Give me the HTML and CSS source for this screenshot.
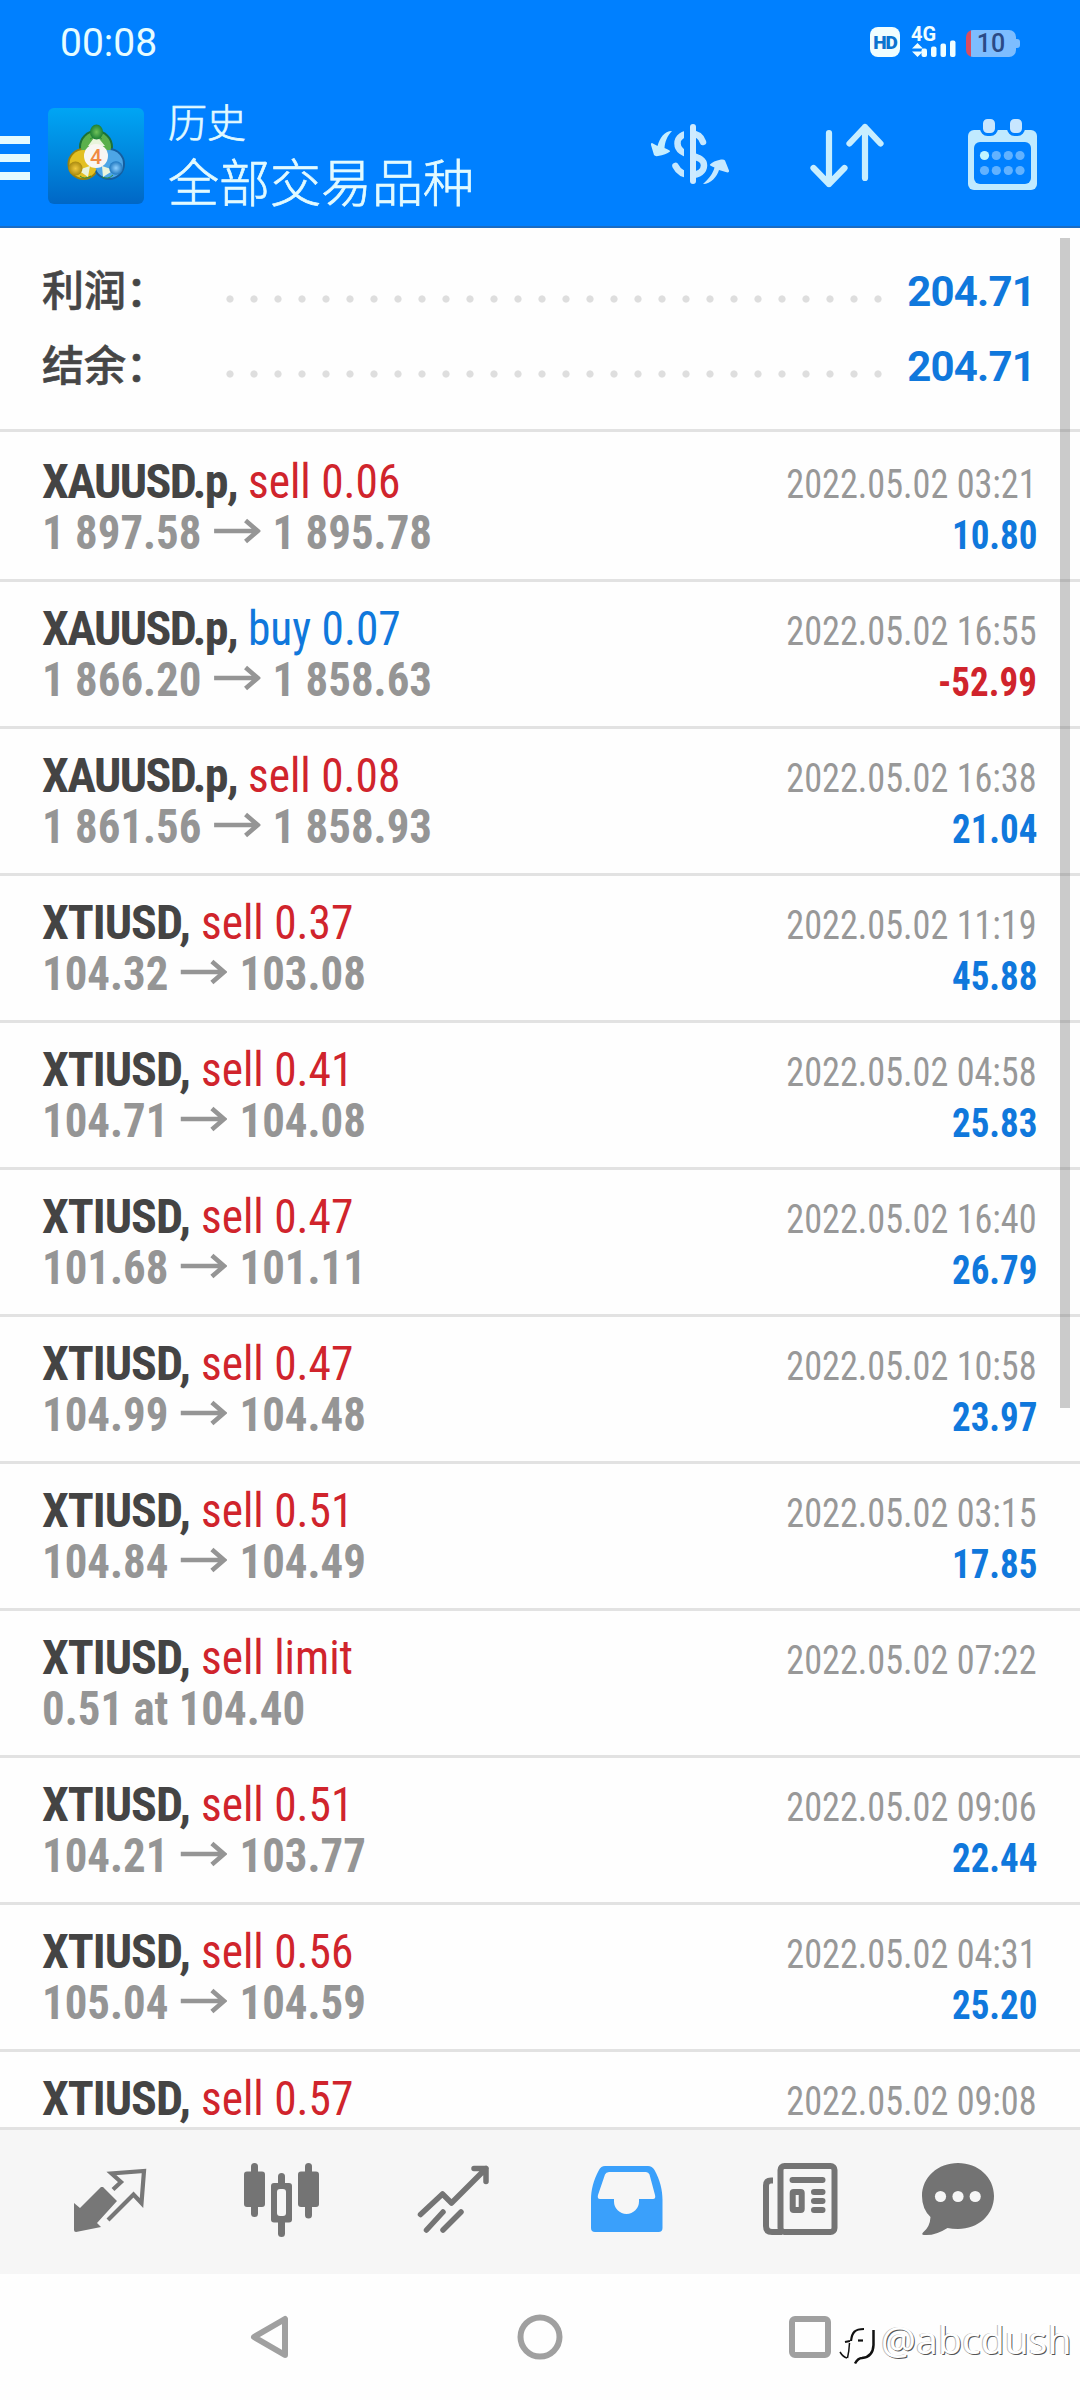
FILE: index.html
```html
<!DOCTYPE html>
<html lang="zh-CN">
<head>
<meta charset="utf-8">
<title>历史</title>
<link rel="stylesheet" href="styles.css">
</head>
<body>
<svg width="0" height="0" class="defs"><defs>
  <symbol id="arrow" viewBox="0 0 46 26" preserveAspectRatio="none"><path d="M0 13H43M31 2.500L43 13L31 23.500" fill="none" stroke="#959595" stroke-width="4.500"/></symbol>
  <linearGradient id="tile" x1="0" y1="0" x2="0" y2="1"><stop offset="0" stop-color="#00a5f4"/><stop offset=".5" stop-color="#0088de"/><stop offset="1" stop-color="#0067c6"/></linearGradient>
  <radialGradient id="green"><stop offset="0" stop-color="#6fc25a"/><stop offset="1" stop-color="#1c7f35"/></radialGradient>
  <radialGradient id="gold"><stop offset="0" stop-color="#f2c93c"/><stop offset="1" stop-color="#a98a10"/></radialGradient>
  <radialGradient id="sky"><stop offset="0" stop-color="#8fd0ff"/><stop offset="1" stop-color="#1f78c0"/></radialGradient>
</defs></svg>
<div class="screen">
  <header class="header">
    <div class="status">
      <span class="clock">00:08</span>
      <div class="indicators">
        <span class="hd">HD</span>
        <span class="signal"><b>4G</b>
          <svg viewBox="911 40 46 18" width="46" height="18" fill="#f0feff"><path d="M912 48.500L917.500 43L923 48.500ZM912 51.500H923L917.500 57Z"/><rect x="921.500" y="48.500" width="5.500" height="8.500" rx="2"/><rect x="931" y="46.500" width="5.500" height="10.500" rx="2"/><rect x="940.500" y="43.500" width="5.500" height="13.500" rx="2"/><rect x="950" y="40.500" width="5.500" height="16.500" rx="2"/></svg>
        </span>
        <span class="battery">10</span>
      </div>
    </div>
    <div class="appbar">
      <svg class="burger" viewBox="0 0 30 44" width="30" height="44" fill="#e4fbff"><path d="M0 0H30V8H0ZM0 18H30V26H0ZM0 36H30V44H0Z"/></svg>
      <svg class="logo" viewBox="48 108 96 96" width="96" height="96">
        <rect x="48" y="108" width="96" height="96" rx="6" fill="url(#tile)"/>
        <circle cx="96" cy="147" r="17" fill="#1c7137"/><circle cx="83.500" cy="164" r="16" fill="#98800e"/><circle cx="109" cy="164" r="16" fill="#155e9f"/>
        <circle cx="96" cy="147" r="15" fill="#5bb04b"/><circle cx="83.500" cy="164" r="14" fill="#e3c022"/><circle cx="109" cy="164" r="14" fill="#4da6e6"/>
        <path d="M88 146L96 135L105 146ZM78 170L88 177L90 166ZM114 170L103 177L102 166Z" fill="#e9f4dc"/>
        <path d="M90 139A10 10 0 0 1 102 139M80 176Q84 180 91 176M102 177Q108 180 113 175" fill="none" stroke="#2f8f3d" stroke-width="1"/>
        <ellipse cx="96.500" cy="132" rx="6.500" ry="7.500" fill="url(#green)"/><circle cx="75.500" cy="168.500" r="7" fill="url(#gold)"/><circle cx="116" cy="168" r="6.800" fill="url(#sky)"/>
        <circle cx="96" cy="156" r="12" fill="#f8f6f3"/>
        <text x="96" y="163.500" text-anchor="middle" class="four">4</text>
      </svg>
      <div class="titles"><div class="t1">历史</div><div class="t2">全部交易品种</div></div>
      <div class="actions">
        <svg viewBox="650 115 80 80" width="80" height="80">
          <path d="M703 142C701 136 697 133.500 691 133.500C683 133.500 677.500 137 677.500 143.500C677.500 151 684 153 691 155.500C700 158 704 160 704 165.500C704 171 699 175 691 175C684 175 679 173 675.500 166" fill="none" stroke="#c6e8ff" stroke-width="6.500" stroke-linecap="round"/>
          <path d="M684 126H690V182H684Z" fill="#0080ff"/><path d="M693 127V181" stroke="#cdeaff" stroke-width="6" stroke-linecap="round"/>
          <path d="M672 131C664 131 660 138 657.500 146L652 143Q650.500 143 651 145L654 155Q655 156.500 658 156Q666 154.500 670 151.500Q671 150.500 664.500 148C665 142 667 136 672 131Z" fill="#c6eeff"/>
          <path d="M703 183.500C711 183.500 717 176 719 169.500L727.500 172Q729.500 172 729 170L725 160Q724 158.500 721 159Q713 160.500 710 164Q709 165 714.500 167C713 173 709 178 703 183.500Z" fill="#c6e8ff" transform="translate(0 .5)"/>
        </svg>
        <svg viewBox="806 115 80 80" width="80" height="80" fill="none" stroke="#c8eeff" stroke-width="6.200" stroke-linecap="round" stroke-linejoin="round"><path d="M828 133V184M812.500 168L828 184L843.500 168M864 178V127M848.500 143.500L864 127L879.500 143.500"/></svg>
        <svg viewBox="963 115 80 80" width="80" height="80"><rect x="968" y="130" width="69" height="60" rx="6" fill="#c0eaff"/><rect x="974" y="142" width="57" height="42" rx="6" fill="#0080ff"/><g fill="#c8e6ff" stroke="#0080ff" stroke-width="3"><rect x="981.500" y="117.500" width="15" height="17" rx="6"/><rect x="1008.500" y="117.500" width="15" height="17" rx="6"/></g><g fill="#62b2ff"><circle cx="984.500" cy="155.500" r="4.600" fill="#c0f4ff"/><circle cx="996.300" cy="155.500" r="4.600"/><circle cx="1008.300" cy="155.500" r="4.600"/><circle cx="1020" cy="155.500" r="4.600"/><circle cx="984.500" cy="170.500" r="4.600"/><circle cx="996.300" cy="170.500" r="4.600"/><circle cx="1008.300" cy="170.500" r="4.600"/><circle cx="1020" cy="170.500" r="4.600"/></g></svg>
      </div>
    </div>
  </header>
  <main class="history">
    <section class="summary">
      <div class="sum"><span class="label">利润：</span><span class="dots"></span><span class="total">204.71</span></div>
      <div class="sum"><span class="label">结余：</span><span class="dots"></span><span class="total">204.71</span></div>
    </section>
    <article class="deal"><div class="line"><span><b class="gold">XAUUSD.p,</b> <i class="sell">sell 0.06</i></span><time>2022.05.02 03:21</time></div><div class="line price"><span>1 897.58<svg class="to"><use href="#arrow"/></svg>1 895.78</span><em>10.80</em></div></article>
    <article class="deal"><div class="line"><span><b class="gold">XAUUSD.p,</b> <i class="buy">buy 0.07</i></span><time>2022.05.02 16:55</time></div><div class="line price"><span>1 866.20<svg class="to"><use href="#arrow"/></svg>1 858.63</span><em class="loss">-52.99</em></div></article>
    <article class="deal"><div class="line"><span><b class="gold">XAUUSD.p,</b> <i class="sell">sell 0.08</i></span><time>2022.05.02 16:38</time></div><div class="line price"><span>1 861.56<svg class="to"><use href="#arrow"/></svg>1 858.93</span><em>21.04</em></div></article>
    <article class="deal"><div class="line"><span><b>XTIUSD,</b> <i class="sell">sell 0.37</i></span><time>2022.05.02 11:19</time></div><div class="line price"><span>104.32<svg class="to"><use href="#arrow"/></svg>103.08</span><em>45.88</em></div></article>
    <article class="deal"><div class="line"><span><b>XTIUSD,</b> <i class="sell">sell 0.41</i></span><time>2022.05.02 04:58</time></div><div class="line price"><span>104.71<svg class="to"><use href="#arrow"/></svg>104.08</span><em>25.83</em></div></article>
    <article class="deal"><div class="line"><span><b>XTIUSD,</b> <i class="sell">sell 0.47</i></span><time>2022.05.02 16:40</time></div><div class="line price"><span>101.68<svg class="to"><use href="#arrow"/></svg>101.11</span><em>26.79</em></div></article>
    <article class="deal"><div class="line"><span><b>XTIUSD,</b> <i class="sell">sell 0.47</i></span><time>2022.05.02 10:58</time></div><div class="line price"><span>104.99<svg class="to"><use href="#arrow"/></svg>104.48</span><em>23.97</em></div></article>
    <article class="deal"><div class="line"><span><b>XTIUSD,</b> <i class="sell">sell 0.51</i></span><time>2022.05.02 03:15</time></div><div class="line price"><span>104.84<svg class="to"><use href="#arrow"/></svg>104.49</span><em>17.85</em></div></article>
    <article class="deal"><div class="line"><span><b>XTIUSD,</b> <i class="sell">sell limit</i></span><time>2022.05.02 07:22</time></div><div class="line price"><span>0.51 at 104.40</span></div></article>
    <article class="deal"><div class="line"><span><b>XTIUSD,</b> <i class="sell">sell 0.51</i></span><time>2022.05.02 09:06</time></div><div class="line price"><span>104.21<svg class="to"><use href="#arrow"/></svg>103.77</span><em>22.44</em></div></article>
    <article class="deal"><div class="line"><span><b>XTIUSD,</b> <i class="sell">sell 0.56</i></span><time>2022.05.02 04:31</time></div><div class="line price"><span>105.04<svg class="to"><use href="#arrow"/></svg>104.59</span><em>25.20</em></div></article>
    <article class="deal"><div class="line"><span><b>XTIUSD,</b> <i class="sell">sell 0.57</i></span><time>2022.05.02 09:08</time></div></article>
    <div class="scrollbar"></div>
  </main>
  <nav class="tabs">
    <svg viewBox="65 2155 90 90" width="90" height="90"><path d="M103 2187L117 2201L97 2223L101 2227L76 2232Q74 2232 74 2230V2203L80 2208L101 2187Z" fill="#777"/><path d="M113 2189.500L121 2182L111.500 2173.500L144 2171L141.500 2203L133.500 2194.500L108 2220" fill="none" stroke="#777" stroke-width="4.200"/></svg>
    <svg viewBox="237 2155 90 90" width="90" height="90" fill="#747474"><rect x="244" y="2171.500" width="21" height="35.500" rx="3"/><rect x="251" y="2163" width="7" height="54" rx="3.500"/><rect x="298" y="2171.500" width="21" height="35.500" rx="3"/><rect x="305" y="2163" width="7" height="55.500" rx="3.500"/><rect x="278" y="2173" width="7" height="64" rx="3.500"/><rect x="271" y="2183" width="21" height="39.500" rx="3"/><rect x="277" y="2189" width="9" height="27" rx="3" fill="#f6f6f6"/></svg>
    <svg viewBox="409 2155 90 90" width="90" height="90" fill="none" stroke="#747474" stroke-width="5.500" stroke-linecap="round" stroke-linejoin="round"><path d="M420.500 2214.500L442.500 2194L451.500 2203L486 2168.500M474 2168.500H486V2181.500M426.500 2230L443 2212M443 2230L461 2212"/></svg>
    <svg viewBox="581 2155 90 90" width="90" height="90"><path fill="#3aa0fb" fill-rule="evenodd" d="M605 2166H648Q652 2166 654.500 2170C660 2180 662.500 2190 662.500 2200V2228Q662.500 2232 658.500 2232H595Q591 2232 591 2228V2200C591 2190 593.500 2180 599 2170Q601 2166 605 2166ZM609 2172Q606 2172 605 2174.500L598 2195Q597 2199 600 2199H614V2201.500A12.500 12.500 0 0 0 639 2201.500V2199H653Q656 2199 655 2195L649.500 2174.500Q648.500 2172 646 2172Z"/></svg>
    <svg viewBox="753 2155 90 90" width="90" height="90" fill="none" stroke="#747474" stroke-width="6"><rect x="780.500" y="2166" width="54" height="66" rx="4"/><path d="M773 2180.500H771Q766 2180.500 766 2185.500V2226Q766 2232 772 2232H782"/><path d="M792.500 2180H822.500M814 2192H822.500M814 2201H822.500M814 2210H822.500" stroke-linecap="round"/><rect x="792.700" y="2192" width="9" height="18" rx="1"/></svg>
    <svg class="chat" viewBox="913 2155 90 90" width="90" height="90"><path d="M958 2163C978 2163 994 2177 994 2196S978 2229 958 2229Q952 2229 947.500 2228Q935 2236 924 2235Q921 2234.500 923 2232.500Q930 2227 930.500 2217Q922 2209 922 2196C922 2177 938 2163 958 2163Z" fill="#737373"/><g fill="#f6f6f6"><circle cx="940.500" cy="2196.500" r="5.600"/><circle cx="958" cy="2196.500" r="5.600"/><circle cx="975.200" cy="2196.500" r="5.600"/></g></svg>
  </nav>
  <div class="system">
    <svg viewBox="240 2307 60 60" width="60" height="60" fill="none" stroke="#a0a0a0" stroke-width="6" stroke-linejoin="round"><path d="M254 2337L285 2319V2355Z"/></svg>
    <svg viewBox="510 2307 60 60" width="60" height="60" fill="none" stroke="#a0a0a0" stroke-width="6"><circle cx="540" cy="2337" r="19.500"/></svg>
    <svg viewBox="780 2307 60 60" width="60" height="60" fill="none" stroke="#a0a0a0" stroke-width="6"><rect x="792" y="2319" width="36" height="36" rx="3"/></svg>
  </div>
  <div class="watermark">
    <svg viewBox="839 2320 40 46" width="40" height="46" fill="none" stroke="#111"><path d="M864 2329C855 2329 852 2332 851 2341M845 2342L850 2341" stroke-width="2.200"/><path d="M849.500 2343Q849 2352 847.500 2358" stroke-width="1.500"/><path d="M847 2358Q843 2357 840 2352" stroke-width="1.500"/><path d="M873.500 2330V2345Q873 2357 862 2358Q858 2358 855 2363.500" stroke-width="2.500"/><path d="M858 2340.500H863" stroke-width="2.200"/></svg>
    <span>@abcdush</span>
  </div>
</div>
</body>
</html>
```
FILE: styles.css
```css
* { box-sizing: border-box; }
body { margin: 0; background: #fefefe; }
svg { display: block; flex: none; }
.defs { position: absolute; }
.screen {
  position: relative;
  width: 1080px;
  height: 2400px;
  display: flex;
  flex-direction: column;
  overflow: hidden;
  font-family: Roboto, "Noto Sans CJK SC", sans-serif;
}

/* Header */
.header { height: 228px; background: #0080ff; border-bottom: 2px solid #1a6cc4; color: #e6fcff; }
.status { height: 84px; padding: 0 60px; display: flex; justify-content: space-between; }
.clock { font-size: 39px; line-height: 86px; }
.indicators { display: flex; align-items: flex-start; padding-top: 27px; }
.hd {
  width: 30px; height: 30px; border-radius: 8px; background: #f0feff;
  color: #0b73cf; font-size: 19px; font-weight: 900; line-height: 31px; letter-spacing: -1px; text-align: center;
}
.signal { width: 46px; margin-left: 11px; }
.signal b { display: block; height: 13px; font-size: 20px; line-height: 14px; color: #f0feff; }
.battery {
  position: relative;
  width: 50px; height: 27px; margin: 3px 4px 0 9px; border-radius: 7px;
  background: linear-gradient(90deg, #d94d60 5px, #7dbdff 5px);
  color: #2a4a86; font-size: 25px; font-weight: 500; line-height: 28px; text-align: center;
}
.battery::after {
  content: ""; position: absolute; left: 50px; top: 9px;
  width: 4px; height: 9px; border-radius: 0 3px 3px 0; background: #7dbdff;
}
.appbar { display: flex; align-items: flex-start; }
.burger { margin-top: 52px; }
.logo { margin: 24px 0 0 18px; }
.four { font: 500 21px Roboto, sans-serif; fill: #f08a42; }
.titles {
  margin: 8px 0 0 24px; color: #e2faff;
  font-family: "Noto Sans CJK SC", sans-serif; font-weight: 300;
  -webkit-text-stroke: .7px #e2faff;
}
.t1 { font-size: 39px; line-height: 56px; }
.t2 { font-size: 51px; line-height: 64px; }
.actions { margin: 31px 37px 0 auto; display: flex; gap: 76.5px; }

/* History list */
.history { position: relative; height: 1902px; overflow: hidden; border-bottom: 3px solid #e2e2e2; }
.summary { height: 204px; margin-bottom: 3px; padding: 25px 45px 0 42px; border-bottom: 3px solid #e2e2e2; }
.sum { height: 75px; display: flex; align-items: center; }
.label {
  width: 184px; margin-top: -6px; color: #464646; white-space: nowrap;
  font: 500 42px/69px "Noto Sans CJK SC", sans-serif; -webkit-text-stroke: .6px #464646;
}
.dots {
  width: 656px; height: 8px; margin-top: 17px;
  background: radial-gradient(circle at 4px 4px, #dedede 3.2px, transparent 4px) 0 0 / 24px 8px;
}
.total { margin: 1px 0 0 auto; font-size: 42px; font-weight: 700; letter-spacing: -.8px; color: #1078dc; }
.deal { height: 147px; padding: 21px 43px 0 42px; border-bottom: 3px solid #e2e2e2; font-family: "Roboto Condensed", Roboto, sans-serif; }
.line { height: 51px; display: flex; align-items: baseline; justify-content: space-between; font-size: 48px; line-height: 51px; white-space: nowrap; }
.line b { color: #444; letter-spacing: -1.05px; }
.line .gold { letter-spacing: -1.6px; }
.line i { display: inline-block; font-style: normal; transform: scaleX(.945); transform-origin: left; }
.sell { color: #d0242c; }
.buy { color: #1078dc; }
.line time { font-size: 40px; color: #989898; transform: scaleX(.905); transform-origin: right; }
.line em { font-size: 40px; font-style: normal; font-weight: 700; color: #1078dc; transform: scaleX(.925); transform-origin: right; }
.line .loss { color: #d0242c; }
.price { color: #959595; font-weight: 700; }
.price span { transform: scaleX(.935); transform-origin: left; }
.to { display: inline-block; width: 50px; height: 26px; margin: 0 13px; vertical-align: 5px; }
.scrollbar { position: absolute; left: 1060px; top: 10px; width: 10px; height: 1170px; background: rgba(100, 100, 100, .33); }

/* Bottom bars */
.tabs { height: 144px; padding: 25px 0 0 65px; display: flex; gap: 82px; background: #f6f6f6; }
.chat { margin-left: -12px; }
.system { height: 126px; display: flex; justify-content: center; gap: 210px; padding-top: 33px; }
.watermark { position: absolute; left: 839px; top: 2320px; display: flex; gap: 2px; }
.watermark span {
  margin-top: -4px; color: #fff;
  font: 400 39px/46px "Noto Sans", sans-serif;
  text-shadow: 1px 1px 0 #555, -1px 0 0 #bbb;
}
```
